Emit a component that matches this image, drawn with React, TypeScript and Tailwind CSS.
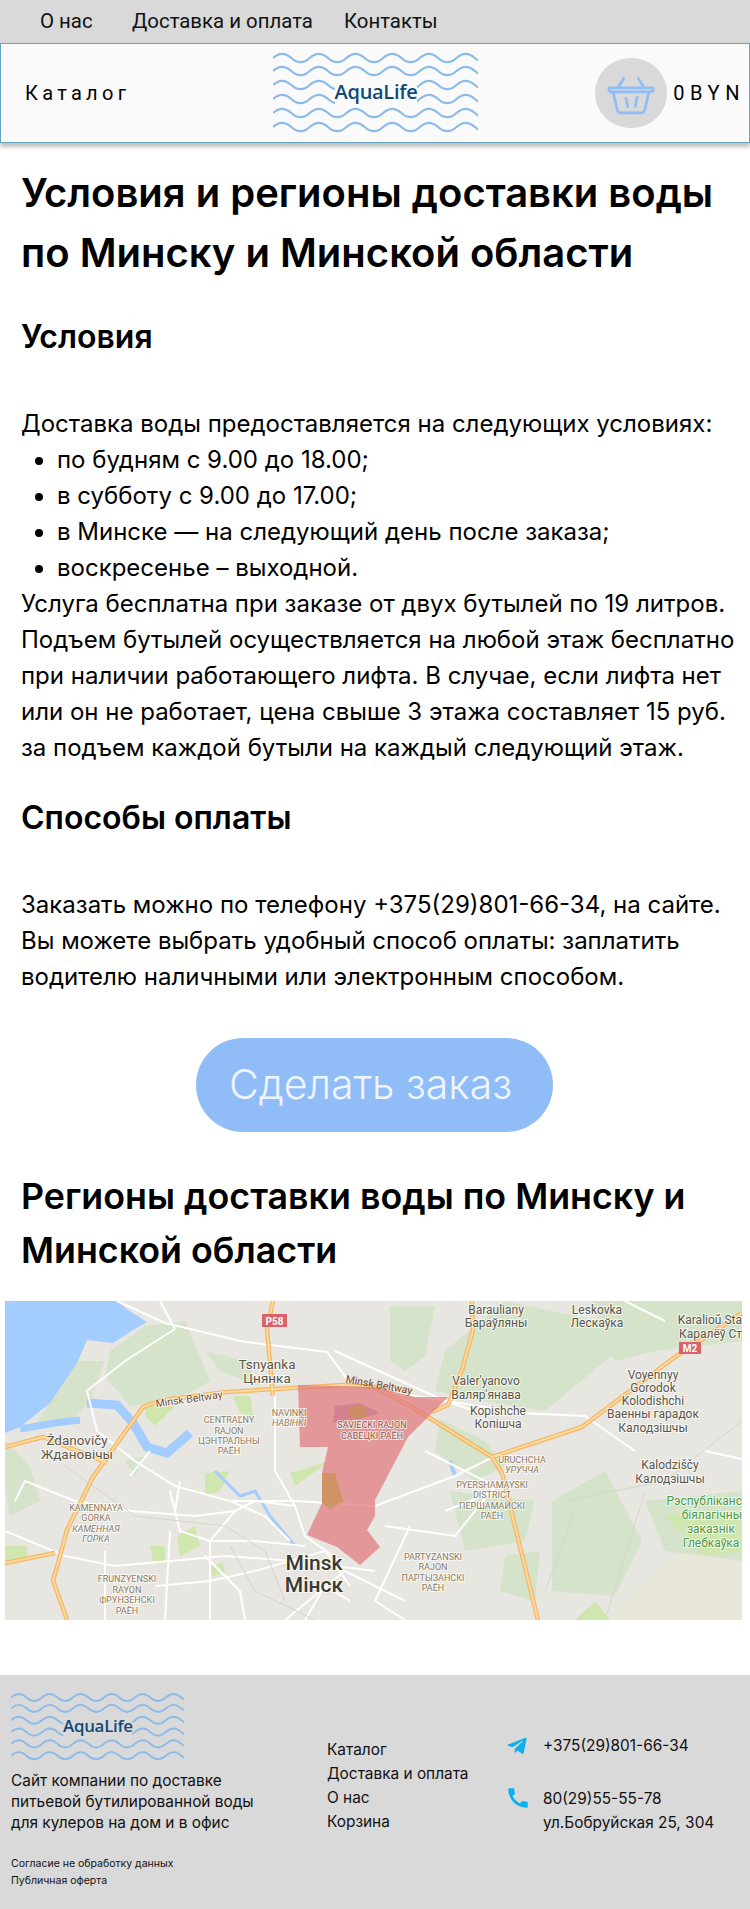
import { FaTelegramPlane } from 'react-icons/fa';
import { MdCall } from 'react-icons/md';

function wave(y: number, period = 36.7, amp = 4.2) {
  let d = `M0 ${y}`;
  let x = 0;
  let up = true;
  while (x < 205) {
    const nx = x + period / 2;
    d += ` Q${x + period / 4} ${up ? y - amp * 2 : y + amp * 2} ${nx} ${y}`;
    x = nx;
    up = !up;
  }
  return d;
}

function Logo({ className, id }: { className: string; id: string }) {
  return (
    <svg viewBox="0 0 205 82" className={className}>
      <defs>
        <clipPath id={id}>
          <rect x="0" y="0" width="62" height="82" />
          <rect x="144" y="0" width="61" height="82" />
        </clipPath>
      </defs>
      <g fill="none" stroke="#8cbbe9" strokeWidth="2.2">
        <path d={wave(6)} />
        <path d={wave(19)} />
        <g clipPath={`url(#${id})`}>
          <path d={wave(33)} />
          <path d={wave(47)} />
        </g>
        <path d={wave(61)} />
        <path d={wave(75)} />
      </g>
      <text x="103" y="46.5" textAnchor="middle" fill="#10497a" className="font-['Open_Sans',sans-serif] font-semibold text-[20px] tracking-[-0.3px]">
        AquaLife
      </text>
    </svg>
  );
}

const roads = [
  'M112 0 L160 22 L240 41 L322 51 L345 82',
  'M155 0 L170 28',
  'M170 28 L120 60 L82 90 L92 130 L130 160 L170 185 L225 200 L290 200 L370 205',
  'M125 175 L145 150 M175 180 L170 210',
  'M0 230 L60 255 L110 265 L220 255 L290 260 L370 270',
  'M10 200 L20 180 L70 200 L125 210 L190 215 L230 210 L250 200 L290 205',
  'M270 90 L270 170 L290 205 L300 235 L335 260',
  'M230 210 L205 240 L205 319 M165 230 L160 319 M100 250 L100 319',
  'M200 255 L235 290 L240 319 M250 270 L320 250 L345 285',
  'M280 319 L340 270 L400 300 M370 205 L450 175 L500 150',
  'M330 50 L440 100 L470 110 L580 115 L630 150 M390 92 L520 112',
  'M420 150 L490 185 L450 235 L380 225 M440 210 L490 190',
  'M405 225 L370 300 L400 319',
  'M165 190 L175 230 L205 240 L250 240 L300 245',
  'M150 285 L205 280 L250 270 M300 319 L320 285 L345 300',
  'M225 200 L260 215 L285 240 M620 0 L660 20 M700 150 L737 158',
];

const thinRoads = [
  'M60 165 L130 215 L220 225 L260 250 L280 300',
  'M560 200 L660 180 L737 120',
  'M540 290 L570 210 M600 319 L640 190',
  'M225 245 L250 290 L310 319',
];

const greens = [
  'M140 25 L180 20 L205 80 L170 100 L125 105 L100 75 L105 50 Z',
  'M70 60 L100 60 L85 100 L60 125 L30 125 Z',
  'M200 50 L240 60 L255 85 L215 70 Z',
  'M440 50 L500 0 L640 30 L600 60 L540 110 L480 100 L430 90 Z',
  'M385 5 L430 5 L420 55 L400 70 L385 60 Z',
  'M585 0 L737 0 L737 40 L650 50 L610 60 Z',
  'M547 200 L600 170 L637 240 L610 295 L547 290 Z',
  'M640 200 L737 190 L737 260 L660 250 Z',
  'M435 118 L480 140 L500 165 L470 180 L430 150 Z',
  'M445 190 L530 200 L520 240 L460 250 Z',
  'M0 140 L25 165 L35 200 L5 215 L0 190 Z',
  'M120 160 L140 155 L130 175 Z',
  'M500 255 L535 250 L530 300 L495 290 Z',
];

const lightGreens = [
  'M140 100 L180 95 L150 125 L140 115 Z',
  'M285 172 L325 160 L290 185 Z',
  'M228 95 L245 95 L248 115 L235 112 Z',
  'M172 235 L190 225 L195 245 L175 255 Z',
  'M660 215 L737 210 L737 250 L700 255 Z',
  'M0 245 L22 245 L22 258 L0 262 Z',
  'M145 245 L160 245 L160 262 L148 260 Z',
  'M205 265 L218 262 L220 272 L208 275 Z',
  'M570 319 L590 300 L605 319 Z',
  'M200 172 L225 170 L215 190 L200 195 Z',
];

const labels: { x: number; y: number; t: string; s?: number; c?: string; i?: boolean; w?: number; a?: 'end' }[] = [
  { x: 262, y: 68, t: 'Tsnyanka', s: 13.5 },
  { x: 262, y: 82, t: 'Цнянка', s: 13.5 },
  { x: 72, y: 144, t: 'Ždanovičy', s: 13.5 },
  { x: 72, y: 158, t: 'Ждановічы', s: 13.5 },
  { x: 224, y: 122, t: 'CENTRAĽNY', c: '#8c7a5e' },
  { x: 224, y: 133, t: 'RAJON', c: '#8c7a5e' },
  { x: 224, y: 143, t: 'ЦЭНТРАЛЬНЫ', c: '#8c7a5e' },
  { x: 224, y: 153, t: 'РАЁН', c: '#8c7a5e' },
  { x: 284, y: 115, t: 'NAVINKI', c: '#8c7a5e' },
  { x: 284, y: 125, t: 'НАВІНКІ', c: '#8c7a5e', i: true },
  { x: 91, y: 210, t: 'KAMENNAYA', c: '#8c7a5e' },
  { x: 91, y: 220, t: 'GORKA', c: '#8c7a5e' },
  { x: 91, y: 231, t: 'КАМЕННАЯ', c: '#8c7a5e', i: true },
  { x: 91, y: 241, t: 'ГОРКА', c: '#8c7a5e', i: true },
  { x: 122, y: 281, t: 'FRUNZYENSKI', c: '#8c7a5e' },
  { x: 122, y: 292, t: 'RAYON', c: '#8c7a5e' },
  { x: 122, y: 302, t: 'ФРУНЗЕНСКІ', c: '#8c7a5e' },
  { x: 122, y: 313, t: 'РАЁН', c: '#8c7a5e' },
  { x: 309, y: 269, t: 'Minsk', s: 21, w: 500, c: '#3c3a30' },
  { x: 309, y: 291, t: 'Мінск', s: 21, w: 500, c: '#3c3a30' },
  { x: 367, y: 127, t: 'SAVIECKI RAJON', c: '#8a5a50' },
  { x: 367, y: 138, t: 'САВЕЦКІ РАЁН', c: '#8a5a50' },
  { x: 491, y: 13, t: 'Barauliany', s: 12 },
  { x: 491, y: 26, t: 'Бараўляны', s: 12 },
  { x: 592, y: 13, t: 'Leskovka', s: 12 },
  { x: 592, y: 26, t: 'Лескаўка', s: 12 },
  { x: 737, y: 23, t: 'Karalioŭ Sta', s: 12, a: 'end' },
  { x: 737, y: 37, t: 'Каралёў Ст', s: 12, a: 'end' },
  { x: 481, y: 84, t: "Valer'yanovo", s: 12 },
  { x: 481, y: 98, t: "Валяр'янава", s: 12 },
  { x: 493, y: 114, t: 'Kopishche', s: 12 },
  { x: 493, y: 127, t: 'Копішча', s: 12 },
  { x: 648, y: 78, t: 'Voyennyy', s: 12 },
  { x: 648, y: 91, t: 'Gorodok', s: 12 },
  { x: 648, y: 104, t: 'Kolodishchi', s: 12 },
  { x: 648, y: 117, t: 'Ваенны гарадок', s: 12 },
  { x: 648, y: 131, t: 'Калодзішчы', s: 12 },
  { x: 517, y: 162, t: 'URUCHCHA', c: '#8c7a5e' },
  { x: 517, y: 172, t: 'УРУЧЧА', c: '#8c7a5e', i: true },
  { x: 487, y: 187, t: 'PYERSHAMAYSKI', c: '#8c7a5e' },
  { x: 487, y: 197, t: 'DISTRICT', c: '#8c7a5e' },
  { x: 487, y: 208, t: 'ПЕРШАМАЙСКІ', c: '#8c7a5e' },
  { x: 487, y: 218, t: 'РАЁН', c: '#8c7a5e' },
  { x: 428, y: 259, t: 'PARTYZANSKI', c: '#8c7a5e' },
  { x: 428, y: 269, t: 'RAJON', c: '#8c7a5e' },
  { x: 428, y: 280, t: 'ПАРТЫЗАНСКІ', c: '#8c7a5e' },
  { x: 428, y: 290, t: 'РАЁН', c: '#8c7a5e' },
  { x: 665, y: 168, t: 'Kalodziščy', s: 12 },
  { x: 665, y: 182, t: 'Калодзішчы', s: 12 },
  { x: 737, y: 204, t: 'Рэспубліканс', s: 12, c: '#4f9a45', a: 'end' },
  { x: 737, y: 218, t: 'біялагічны', s: 12, c: '#4f9a45', a: 'end' },
  { x: 706, y: 232, t: 'заказнік', s: 12, c: '#4f9a45' },
  { x: 706, y: 246, t: 'Глебкаўка', s: 12, c: '#4f9a45' },
];

const highways = [
  'M0 146 L38 136 L102 162',
  'M62 319 L48 279 L52 266 L62 229 L88 176 L138 106 L158 99 L222 91 L338 84 L370 86 L407 106 L487 156 L497 172 L533 319',
  'M0 262 L50 252',
  'M268 0 L262 28 L268 95',
  'M467 0 L468 29 L457 69 L443 104 L427 111',
  'M487 156 L577 126 L670 56 L737 12',
];

function MinskMap() {
  return (
    <svg viewBox="0 0 737 319" className="block w-[737px] h-[319px] ml-[5px] font-['Roboto',sans-serif]">
      <rect width="737" height="319" fill="#e8e6e1" />
      <path d="M600 319 L737 190 L737 319 Z" fill="#e9e7da" />
      {greens.map((d, i) => (
        <path key={i} d={d} fill="#d4e3c9" />
      ))}
      {lightGreens.map((d, i) => (
        <path key={i} d={d} fill="#cfe6ae" />
      ))}
      {/* water */}
      <path d="M0 0 L112 0 L123 9 L142 21 L128 29 L108 42 L82 39 L72 62 L45 102 L15 126 L0 132 Z" fill="#a3ccff" />
      <g fill="none" stroke="#a3ccff">
        <path d="M15 128 L50 122 L75 119" strokeWidth="7" />
        <path d="M82 102 L112 104 L128 122 L142 146 L162 152 L185 132" strokeWidth="9" />
        <path d="M210 170 L235 195 L250 190 L265 215 L290 245" strokeWidth="3" />
        <path d="M445 160 L450 175" strokeWidth="4" />
      </g>
      <g fill="none" stroke="#ffffff" strokeWidth="2">
        {roads.map((d, i) => (
          <path key={i} d={d} />
        ))}
      </g>
      <g fill="none" stroke="#d6d4ce" strokeWidth="1">
        {thinRoads.map((d, i) => (
          <path key={i} d={d} />
        ))}
      </g>
      <g fill="none" strokeLinejoin="round">
        <g stroke="#f3b765" strokeWidth="4.5">
          {highways.map((d, i) => (
            <path key={i} d={d} />
          ))}
        </g>
        <g stroke="#fdd9a0" strokeWidth="2">
          {highways.map((d, i) => (
            <path key={i} d={d} />
          ))}
        </g>
      </g>
      <path d="M257 13 h25 v13 h-25 z" fill="#d9636a" />
      <path d="M674 41 h22 v12 h-22 z" fill="#d9636a" />
      <text x="269.5" y="23.5" textAnchor="middle" fill="#fff" className="text-[10px] font-bold">P58</text>
      <text x="685" y="51" textAnchor="middle" fill="#fff" className="text-[10px] font-bold">M2</text>
      <path d="M330 105 L355 102 L375 112 L355 118 L328 122 Z" fill="#b49ac8" />
      <path
        d="M293 84 L370 86 L410 96 L443 96 L427 112 L403 136 L370 199 L370 215 L362 229 L375 246 L355 264 L332 246 L302 234 L317 202 L317 172 L323 146 L295 146 Z"
        fill="#e0787c"
        fillOpacity="0.72"
      />
      <path d="M317 172 L330 172 L338 200 L325 208 L317 202 Z" fill="#c9925a" fillOpacity="0.8" />
      <path d="M342 106 L360 104 L362 116 L345 118 Z" fill="#c9925a" fillOpacity="0.8" />
      <text x="150" y="100" fill="#75472a" transform="rotate(-8 195 95)" className="text-[10.5px] [paint-order:stroke] stroke-white stroke-[1.5px]">Minsk Beltway</text>
      <text x="340" y="85" fill="#75472a" transform="rotate(10 360 85)" className="text-[10.5px]">Minsk Beltway</text>
      {labels.map(l => (
        <text
          key={l.t + l.x}
          x={l.x}
          y={l.y}
          textAnchor={l.a ?? 'middle'}
          fill={l.c ?? '#5a5548'}
          fontSize={l.s ?? 9}
          fontWeight={l.w ?? 400}
          fontStyle={l.i ? 'italic' : 'normal'}
          className="[paint-order:stroke] stroke-white/70 stroke-[2px]"
        >
          {l.t}
        </text>
      ))}
    </svg>
  );
}

export default function App() {
  return (
    <div className="w-[750px] h-[1909px] bg-white overflow-hidden text-black font-['Inter',sans-serif]">
      {/* Top nav */}
      <nav className="h-[43px] bg-[#d9d9d9] flex items-center pl-10 text-[20.4px] font-['Roboto',sans-serif] text-[#111]">
        <a className="w-[92px]">О нас</a>
        <a className="w-[212px]">Доставка и оплата</a>
        <a>Контакты</a>
      </nav>

      {/* Header */}
      <header className="h-[100px] bg-[#fafafa] border border-[#67a5c6] shadow-[0_4px_4px_rgba(0,0,0,0.25)] flex items-center justify-between pl-[24px] pr-[4px] font-['Roboto',sans-serif]">
        <a className="w-[248px] text-[20px] tracking-[4.3px]">Каталог</a>
        <Logo id="logo-top" className="w-[205px] h-[82px] shrink-0" />
        <div className="flex items-center gap-[6px] ml-auto">
          <div className="w-[72px] h-[70px] rounded-full bg-[#d9d9d9] flex items-center justify-center">
            <svg viewBox="0 0 48 48" className="w-[50px] h-[50px]" fill="none" stroke="#90bdf5" strokeWidth="2.6" strokeLinecap="round" strokeLinejoin="round">
              <path d="M3 19 H45 Q46 23 43 23 H5 Q2 23 3 19 Z" />
              <path d="M12 18 L17 10 M36 18 L31 10" />
              <path d="M7 24 L11 41 Q11.5 43 14 43 H34 Q36.5 43 37 41 L41 24" />
              <path d="M19 29 L21 37 M30 28 L28 37" />
            </svg>
          </div>
          <span className="text-[20px] tracking-[5.6px]">0BYN</span>
        </div>
      </header>

      <main className="pl-[21px] pr-[5px] pt-[20px]">
        <h1 className="text-[40px] leading-[60px] font-semibold">
          Условия и регионы доставки воды по Минску и Минской области
        </h1>
        <h2 className="mt-[30px] text-[32px] leading-[48px] font-semibold">Условия</h2>

        <div className="mt-[45px] text-[24px] leading-[36px]">
          <p>Доставка воды предоставляется на следующих условиях:</p>
          <ul className="list-disc pl-[36px]">
            <li>по будням с 9.00 до 18.00;</li>
            <li>в субботу с 9.00 до 17.00;</li>
            <li>в Минске — на следующий день после заказа;</li>
            <li>воскресенье – выходной.</li>
          </ul>
          <p>
            Услуга бесплатна при заказе от двух бутылей по 19 литров. Подъем бутылей осуществляется на любой этаж бесплатно при наличии работающего лифта. В случае, если лифта нет или он не работает, цена свыше 3 этажа составляет 15 руб. за подъем каждой бутыли на каждый следующий этаж.
          </p>
        </div>

        <h2 className="mt-[28px] text-[32px] leading-[48px] font-semibold">Способы оплаты</h2>

        <p className="mt-[45px] text-[24px] leading-[36px]">
          Заказать можно по телефону +375(29)801-66-34, на сайте. Вы можете выбрать удобный способ оплаты: заплатить водителю наличными или электронным способом.
        </p>

        <div className="mt-[43px] -ml-[21px] -mr-[5px] flex justify-center">
          <button className="w-[357px] h-[94px] -translate-x-[1px] pr-[7px] rounded-[47px] bg-[#90bdf8] text-[#eef5ff] text-[41px] font-light">
            Сделать заказ
          </button>
        </div>

        <h2 className="mt-[37px] text-[35.8px] leading-[54px] font-semibold">
          Регионы доставки воды по Минску и Минской области
        </h2>
      </main>

      <div className="mt-[24px]">
        <MinskMap />
      </div>

      <footer className="mt-[55px] h-[234px] bg-[#d9d9d9] grid grid-cols-[327px_180px_1fr] text-[#111]">
        <div className="pl-[11px] pt-[17px]">
          <Logo id="logo-bottom" className="w-[173px] h-[70px]" />
          <p className="mt-[8px] w-[270px] text-[15.4px] leading-[21px]">
            Сайт компании по доставке питьевой бутилированной воды для кулеров на дом и в офис
          </p>
          <div className="mt-[22px] text-[10.5px] leading-[17px]">
            <p>Согласие не обработку данных</p>
            <p>Публичная оферта</p>
          </div>
        </div>
        <ul className="pt-[63px] text-[15.4px] leading-[24px]">
          <li>Каталог</li>
          <li>Доставка и оплата</li>
          <li>О нас</li>
          <li>Корзина</li>
        </ul>
        <div className="pt-[59px] text-[15.4px] leading-[24px] grid grid-cols-[36px_1fr] content-start">
          <FaTelegramPlane className="text-[#0cb0ee] text-[22px] mt-[1px] -ml-[1px]" />
          <span>+375(29)801-66-34</span>
          <MdCall className="text-[#0cb0ee] text-[26px] mt-[27px] -ml-[2px]" />
          <span className="mt-[29px]">
            80(29)55-55-78
            <br />
            ул.Бобруйская 25, 304
          </span>
        </div>
      </footer>
    </div>
  );
}
